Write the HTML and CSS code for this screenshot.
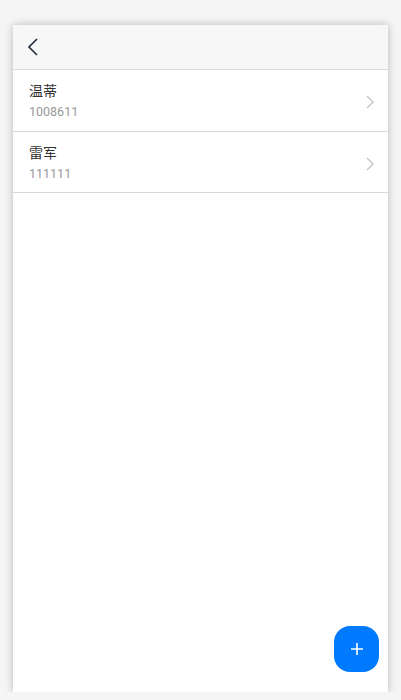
FILE: index.html
```html
<!DOCTYPE html>
<html lang="zh-CN">
<head>
    <meta charset="UTF-8">
    <meta name="viewport" content="width=device-width, initial-scale=1.0">
    <title>联系人</title>
    <link rel="stylesheet" href="styles.css">
</head>
<body>
    <div class="phone">
        <div class="header">
            <span class="back">
                <svg width="12" height="18" viewBox="0 0 12 18"><path d="M10 1 L2 9 L10 17" fill="none" stroke="#1d2838" stroke-width="1.6"/></svg>
            </span>
        </div>
        <ul class="list">
            <li class="item">
                <div class="info">
                    <p class="name">温蒂</p>
                    <p class="num">1008611</p>
                </div>
                <svg class="arrow" width="8" height="14" viewBox="0 0 8 14"><path d="M1 1 L7 7 L1 13" fill="none" stroke="#c4c4c8" stroke-width="1.4"/></svg>
            </li>
            <li class="item">
                <div class="info">
                    <p class="name">雷军</p>
                    <p class="num">111111</p>
                </div>
                <svg class="arrow" width="8" height="14" viewBox="0 0 8 14"><path d="M1 1 L7 7 L1 13" fill="none" stroke="#c4c4c8" stroke-width="1.4"/></svg>
            </li>
        </ul>
        <button class="add">
            <svg width="12" height="12" viewBox="0 0 12 12"><path d="M6 0 V12 M0 6 H12" stroke="#fff" stroke-width="1.6"/></svg>
        </button>
    </div>
</body>
</html>
```

FILE: styles.css
```css
* {
    margin: 0;
    padding: 0;
}
body {
    background-color: #f5f5f5;
    font-family: Roboto, "Noto Sans CJK SC", sans-serif;
    padding-top: 25px;
}
.phone {
    position: relative;
    margin: 0 auto;
    width: 375px;
    height: 667px;
    background-color: #fff;
    box-shadow: 0 0 8px rgba(0, 0, 0, 0.25);
}
.header {
    display: flex;
    align-items: center;
    height: 44px;
    padding-left: 14px;
    background-color: #f7f7f7;
    border-bottom: 1px solid #d9d9d9;
}
.back {
    display: flex;
}
.list {
    list-style: none;
}
.item {
    display: flex;
    align-items: center;
    justify-content: space-between;
    padding: 11px 14px 8.5px 16px;
    border-bottom: 1px solid #d9d9d9;
}
.name {
    font-size: 14px;
    line-height: 21px;
    color: #333;
}
.num {
    font-size: 12.5px;
    line-height: 20px;
    color: #999;
}
.arrow {
    margin-top: 1px;
}
.add {
    position: absolute;
    right: 9px;
    bottom: 20px;
    width: 45px;
    height: 46px;
    border: none;
    border-radius: 16px;
    background-color: #007aff;
    display: flex;
    align-items: center;
    justify-content: center;
}
```
